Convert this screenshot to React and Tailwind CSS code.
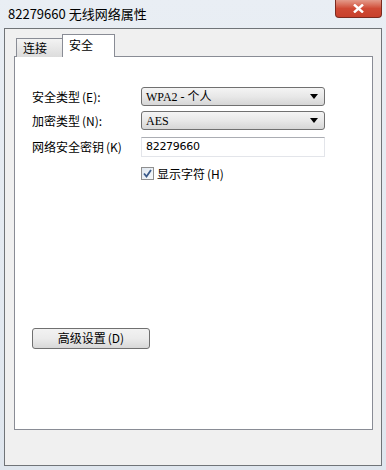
import React, { useState } from 'react';

const cjk = "font-['Noto_Sans_CJK_SC','Microsoft_YaHei',sans-serif]";
const serifCjk = "font-['Liberation_Serif','Noto_Sans_CJK_SC',serif]";

const Select = ({ value }) => (
  <div className="flex items-center h-[19px] w-[184px] rounded-[3px] border border-[#707070] bg-gradient-to-b from-[#f4f4f4] via-[#e8e8e8] to-[#d6d6d6] pl-[4px] pr-[6px]">
    <span className={`flex-1 text-[12px] leading-none text-black ${serifCjk}`}>{value}</span>
    <svg width="8" height="5" viewBox="0 0 8 5">
      <path d="M0 0 L8 0 L4 5 Z" fill="#000" />
    </svg>
  </div>
);

// label with the small gap before the access-key parens
const Label = ({ text, hotkey, className = '' }) => (
  <span className={`leading-none ${className}`}>
    {text}
    <span className="ml-[2px]">{hotkey}</span>
  </span>
);

const App = () => {
  const [showChars, setShowChars] = useState(true);

  return (
    <div className={`w-[386px] h-[470px] flex flex-col bg-gradient-to-b from-[#e9eef4] to-[#dfe6ee] ${cjk}`}>
      {/* title bar */}
      <div className="h-[28px] flex items-start justify-between">
        <span className="pl-[8px] pt-[5px] text-[13px] leading-[18px] text-black">82279660 无线网络属性</span>
        <button className="mr-[4px] w-[47px] h-[18px] rounded-b-[4px] border border-t-0 border-[#7b2a1f] bg-gradient-to-b from-[#e39a8a] via-[#cf4a35] to-[#c8402c] flex items-center justify-center">
          <svg width="11" height="9" viewBox="0 0 11 9">
            <path d="M1 0.5 L10 8.5 M10 0.5 L1 8.5" stroke="#fff" strokeWidth="2.4" />
          </svg>
        </button>
      </div>

      {/* client area */}
      <div className="flex-1 mx-[4px] mb-[4px] border border-[#707478] bg-[#f0f0f0] flex flex-col pt-[5px] pl-[9px] pr-[8px] pb-[35px]">
        {/* tabs */}
        <div className="flex items-end h-[23px] pl-[2px] relative z-10 -mb-px">
          <div className="h-[19px] w-[47px] border border-b-0 border-[#898c95] bg-gradient-to-b from-[#f3f3f3] to-[#dcdcdc] text-[12px] leading-[18px] pl-[6px] text-black">
            连接
          </div>
          <div className="h-[23px] w-[53px] -ml-px border border-b-0 border-[#898c95] bg-white text-[12px] leading-[18px] pl-[6px] pt-[1px] text-black">
            安全
          </div>
        </div>

        {/* panel */}
        <div className="flex-1 border border-[#898c95] bg-white pl-[17px] pt-[30px]">
          <div className="grid grid-cols-[109px_184px] gap-y-[5px] items-center text-[12px] text-black">
            <Label text="安全类型" hotkey="(E):" />
            <Select value="WPA2 - 个人" />
            <Label text="加密类型" hotkey="(N):" />
            <Select value="AES" />
            <Label text="网络安全密钥" hotkey="(K)" className="mt-[2px]" />
            <div className="mt-[2px] h-[20px] w-[184px] border border-[#e3e5ea] border-t-[#abadb3] flex items-center pl-[4px] text-[11px] font-['DejaVu_Sans',sans-serif] tracking-[-0.3px]">
              82279660
            </div>
            <span />
            <label className="mt-[5px] flex items-center gap-[3px] cursor-pointer">
              <span
                onClick={() => setShowChars(!showChars)}
                className="w-[13px] h-[13px] border border-[#8f8f8f] bg-gradient-to-br from-[#dfe7f0] to-[#f7f9fb] flex items-center justify-center"
              >
                {showChars && (
                  <svg width="9" height="9" viewBox="0 0 9 9">
                    <path d="M1 4.5 L3.5 7.5 L8 1" stroke="#3a5a8a" strokeWidth="1.8" fill="none" />
                  </svg>
                )}
              </span>
              <Label text="显示字符" hotkey="(H)" />
            </label>
          </div>

          <div className="mt-[144px]">
            <button className="w-[118px] h-[21px] rounded-[3px] border border-[#707070] bg-gradient-to-b from-[#f2f2f2] via-[#ebebeb] to-[#d8d8d8] text-[12px] leading-none text-black">
              高级设置<span className="ml-[2px]">(D)</span>
            </button>
          </div>
        </div>
      </div>
    </div>
  );
};

export default App;
